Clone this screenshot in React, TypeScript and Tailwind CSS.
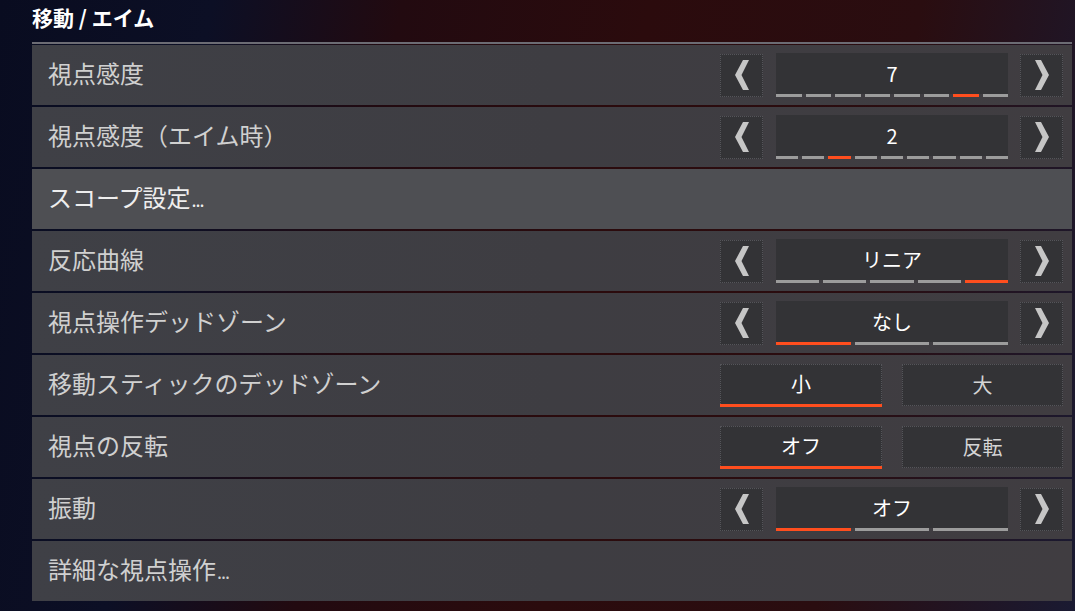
import React from "react";

type Row =
  | { kind: "slider"; label: string; value: string; segments: number; active: number }
  | { kind: "toggle"; label: string; options: [string, string]; active: number }
  | { kind: "link"; label: string; highlight?: boolean };

const rows: Row[] = [
  { kind: "slider", label: "視点感度", value: "7", segments: 8, active: 6 },
  { kind: "slider", label: "視点感度（エイム時）", value: "2", segments: 9, active: 2 },
  { kind: "link", label: "スコープ設定", highlight: true },
  { kind: "slider", label: "反応曲線", value: "リニア", segments: 5, active: 4 },
  { kind: "slider", label: "視点操作デッドゾーン", value: "なし", segments: 3, active: 0 },
  { kind: "toggle", label: "移動スティックのデッドゾーン", options: ["小", "大"], active: 0 },
  { kind: "toggle", label: "視点の反転", options: ["オフ", "反転"], active: 0 },
  { kind: "slider", label: "振動", value: "オフ", segments: 3, active: 0 },
  { kind: "link", label: "詳細な視点操作" },
];

function Chevron({ dir }: { dir: "left" | "right" }) {
  return (
    <svg width="14" height="30" viewBox="0 0 14 30" className={dir === "right" ? "rotate-180" : ""}>
      <polygon points="14,0 8,0 0,15 8,30 14,30 6.5,15" fill="#c6c6c6" />
    </svg>
  );
}

function ArrowBox({ dir }: { dir: "left" | "right" }) {
  return (
    <div className="w-[43px] h-[43px] flex items-center justify-center bg-[#333336] border border-dotted border-[#55555a]">
      <Chevron dir={dir} />
    </div>
  );
}

function Slider({ value, segments, active }: { value: string; segments: number; active: number }) {
  return (
    <div className="flex items-center gap-[12px]">
      <ArrowBox dir="left" />
      <div className="w-[232px] h-[44px] flex flex-col ml-[1px]">
        <div className="flex-1 bg-[#333336] flex items-center justify-center text-[20px] text-white">
          {value}
        </div>
        <div className="flex gap-[4px] h-[3px]">
          {Array.from({ length: segments }).map((_, i) => (
            <div
              key={i}
              className={i === active ? "flex-1 bg-[#ff4e1e]" : "flex-1 bg-[#9c9c9c]"}
            />
          ))}
        </div>
      </div>
      <ArrowBox dir="right" />
    </div>
  );
}

function Toggle({ options, active }: { options: [string, string]; active: number }) {
  return (
    <div className="flex gap-[20px]">
      {options.map((o, i) =>
        i === active ? (
          <div key={o} className="w-[162px] h-[43px] flex flex-col">
            <div className="flex-1 bg-[#333336] border-t border-x border-dotted border-[#55555a] flex items-center justify-center text-[20px] text-white">
              {o}
            </div>
            <div className="h-[3px] bg-[#ff4e1e]" />
          </div>
        ) : (
          <div
            key={o}
            className="w-[161px] h-[42px] bg-[#333336] border border-dotted border-[#55555a] flex items-center justify-center text-[20px] text-[#d4d4d4]"
          >
            {o}
          </div>
        )
      )}
    </div>
  );
}

export default function App() {
  return (
    <div
      className="w-[1075px] h-[611px] overflow-hidden bg-[linear-gradient(100deg,#090c20_0%,#0c0f25_18%,#220a10_34%,#2b0b0d_55%,#2a0d10_78%,#1a1a32_100%)]"
      style={{ fontFamily: '"Noto Sans CJK JP", "Noto Sans", sans-serif' }}
    >
      <div className="ml-[32px] w-[1040px]">
        <div className="h-[42px] flex items-center pb-[6px] text-[21px] font-bold text-white">
          移動 / エイム
        </div>
        <div className="h-[2px] bg-[#6c6c74]" />
        <div className="flex flex-col gap-[2px] mt-[1px]">
          {rows.map((r) => (
            <div
              key={r.label}
              className={
                "h-[60px] flex items-center justify-between pl-[16px] pr-[9px] " +
                (r.kind === "link" && r.highlight
                  ? "bg-[#4e4f53]"
                  : "bg-[linear-gradient(90deg,#3f4046_0%,#3e3d42_50%,#403d41_100%)]")
              }
            >
              <span
                className={
                  "text-[24px] pb-[4px] " +
                  (r.kind === "link" && r.highlight ? "text-[#eeeeee]" : "text-[#d0d0d0]")
                }
              >
                {r.label}
                {r.kind === "link" && (
                  <span className="text-[18px] tracking-[-1px] ml-[1px]">...</span>
                )}
              </span>
              {r.kind === "slider" && (
                <Slider value={r.value} segments={r.segments} active={r.active} />
              )}
              {r.kind === "toggle" && <Toggle options={r.options} active={r.active} />}
            </div>
          ))}
        </div>
      </div>
    </div>
  );
}
